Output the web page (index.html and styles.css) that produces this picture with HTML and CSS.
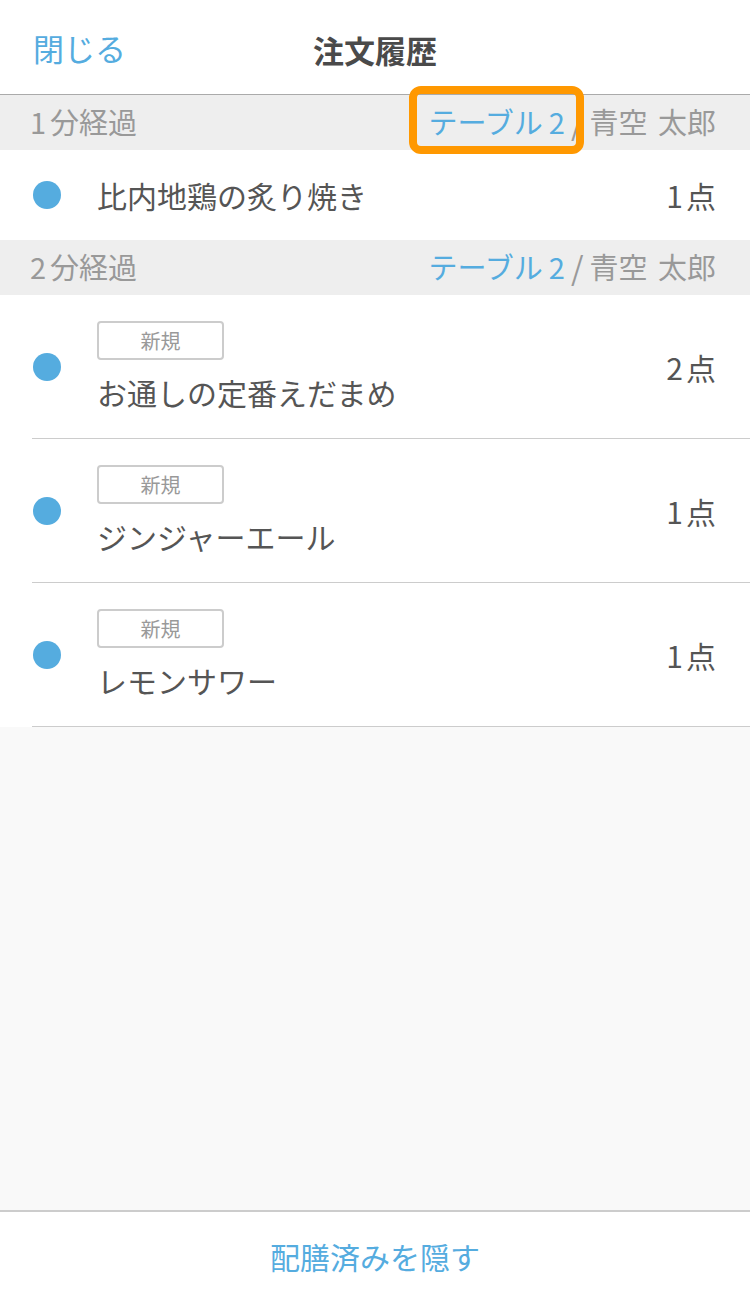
FILE: index.html
```html
<!DOCTYPE html>
<html lang="ja">
<head>
    <meta charset="UTF-8">
    <title>注文履歴</title>
    <link rel="stylesheet" href="styles.css">
</head>
<body>
    <div class="page">
        <div class="header">
            <a class="close-link" href="#">閉じる</a>
            <h1>注文履歴</h1>
        </div>

        <div class="group-head">
            <span class="elapsed"><span class="num">1</span>分経過</span>
            <span class="table-info">
                <span class="table-name highlight">テーブル<span class="num">2</span></span><span class="slash">/</span><span class="staff">青空 太郎</span>
            </span>
        </div>
        <div class="order-row">
            <span class="dot"></span>
            <div class="order-body">
                <div class="order-name">比内地鶏の炙り焼き</div>
            </div>
            <span class="qty"><span class="num">1</span>点</span>
        </div>

        <div class="group-head">
            <span class="elapsed"><span class="num">2</span>分経過</span>
            <span class="table-info">
                <span class="table-name">テーブル<span class="num">2</span></span><span class="slash">/</span><span class="staff">青空 太郎</span>
            </span>
        </div>
        <div class="order-row tall lined">
            <span class="dot"></span>
            <div class="order-body">
                <span class="tag">新規</span>
                <div class="order-name">お通しの定番えだまめ</div>
            </div>
            <span class="qty"><span class="num">2</span>点</span>
        </div>
        <div class="order-row tall lined">
            <span class="dot"></span>
            <div class="order-body">
                <span class="tag">新規</span>
                <div class="order-name">ジンジャーエール</div>
            </div>
            <span class="qty"><span class="num">1</span>点</span>
        </div>
        <div class="order-row tall lined">
            <span class="dot"></span>
            <div class="order-body">
                <span class="tag">新規</span>
                <div class="order-name">レモンサワー</div>
            </div>
            <span class="qty"><span class="num">1</span>点</span>
        </div>

        <div class="filler"></div>

        <div class="footer">
            <a class="hide-link" href="#">配膳済みを隠す</a>
        </div>
    </div>
</body>
</html>
```

FILE: styles.css
```css
body {
    margin: 0;
    padding: 0;
    font-family: "Noto Sans CJK JP", "Noto Sans", sans-serif;
    color: #555;
    background: #fff;
}
a {
    text-decoration: none;
}
.page {
    width: 750px;
    height: 1300px;
    display: flex;
    flex-direction: column;
}
.header {
    height: 94px;
    border-bottom: 1px solid #aaa;
    display: flex;
    align-items: center;
    justify-content: center;
    position: relative;
    flex-shrink: 0;
}
.header h1 {
    margin: 0;
    font-size: 31px;
    font-weight: bold;
    color: #4a4a4a;
    line-height: 1;
    padding-top: 4px;
}
.close-link {
    position: absolute;
    left: 33px;
    top: 30px;
    font-size: 31px;
    line-height: 36px;
    color: #55acdf;
}
.num {
    display: inline-block;
    padding: 0 3px 0 1px;
}
.group-head {
    height: 55px;
    box-sizing: border-box;
    background: #eeeeee;
    display: flex;
    align-items: center;
    justify-content: space-between;
    padding: 0 34px 4px 30px;
    font-size: 29px;
    color: #999;
    flex-shrink: 0;
}
.elapsed .num {
    padding: 0 4px 0 0;
}
.table-info {
    display: flex;
    align-items: center;
}
.table-name {
    color: #55acdf;
    position: relative;
}
.table-name .num {
    padding: 0 0 0 6px;
}
.highlight::after {
    content: "";
    position: absolute;
    left: -20px;
    right: -19px;
    top: -14px;
    bottom: -12px;
    border: 8px solid #ff9800;
    border-radius: 12px;
}
.slash {
    font-size: 32px;
    margin: 0 6px 0 6px;
    color: #999;
}
.staff {
    word-spacing: 4px;
}
.order-row {
    height: 90px;
    display: flex;
    align-items: center;
    padding: 0 34px 0 33px;
    background: #fff;
    flex-shrink: 0;
}
.order-row.tall {
    height: 143px;
}
.order-row.lined {
    margin-left: 32px;
    padding-left: 1px;
    border-bottom: 1px solid #ccc;
}
.dot {
    width: 28px;
    height: 28px;
    border-radius: 50%;
    background: #55acdf;
    flex-shrink: 0;
}
.order-body {
    flex: 1;
    margin-left: 36px;
}
.order-name {
    font-size: 30px;
    color: #555;
    line-height: 40px;
}
.tag {
    display: inline-block;
    width: 123px;
    height: 35px;
    border: 2px solid #ccc;
    border-radius: 4px;
    text-align: center;
    font-size: 20px;
    line-height: 35px;
    color: #999;
    margin-bottom: 12px;
}
.qty {
    font-size: 30px;
    color: #555;
}
.filler {
    flex: 1;
    background: #f9f9f9;
}
.footer {
    height: 88px;
    border-top: 2px solid #ccc;
    display: flex;
    align-items: center;
    justify-content: center;
    flex-shrink: 0;
}
.hide-link {
    font-size: 30px;
    color: #55acdf;
}
```
